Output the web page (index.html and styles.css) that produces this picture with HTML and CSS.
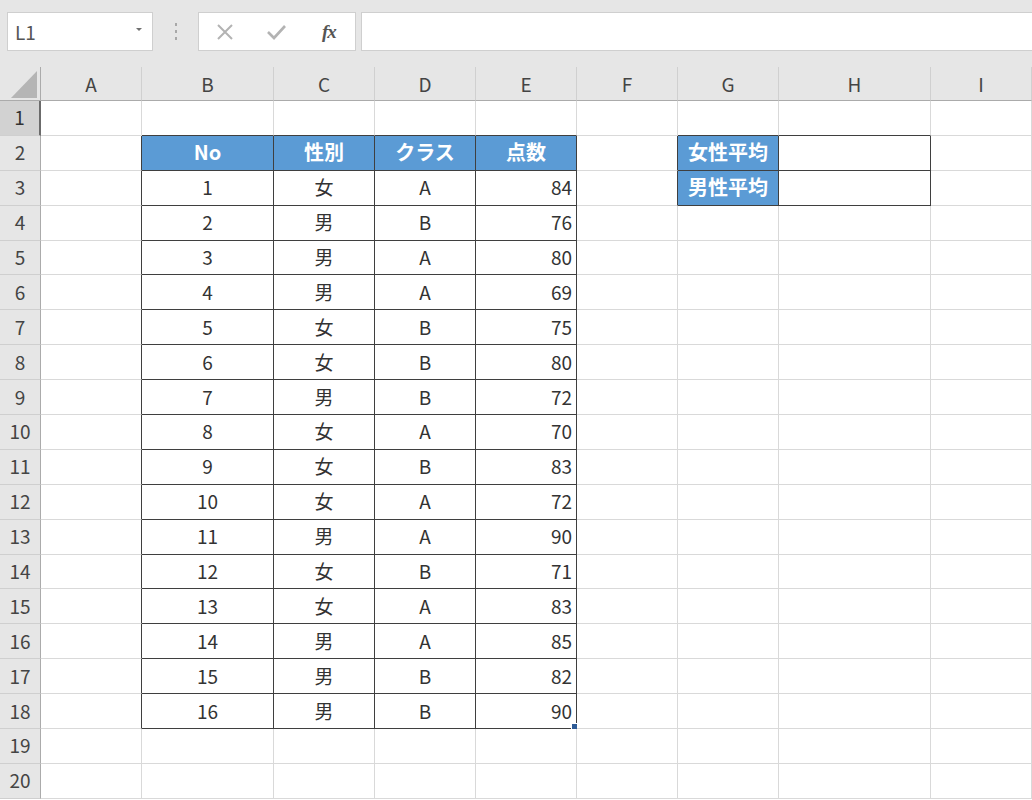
FILE: index.html
```html
<!DOCTYPE html>
<html lang="ja">
<head>
<meta charset="utf-8">
<link rel="stylesheet" href="styles.css">
</head>
<body>
<div class="toolbar">
  <div class="namebox"><span class="name">L1</span><span class="caret"></span></div>
  <div class="dots"><i></i><i></i><i></i></div>
  <div class="btns">
    <svg class="ico" width="20" height="20" viewBox="0 0 20 20"><path d="M3 3 L17 17 M17 3 L3 17" stroke="#b3b3b3" stroke-width="2" fill="none"/></svg>
    <svg class="ico" width="22" height="20" viewBox="0 0 22 20"><path d="M3 10 L9 16 L20 4" stroke="#b3b3b3" stroke-width="2.6" fill="none"/></svg>
    <span class="fx">fx</span>
  </div>
  <div class="formula"></div>
</div>
<div class="sheet" id="sheet">
  <div class="corner"><svg width="41" height="34" viewBox="0 0 41 34"><polygon points="11,31 37,31 37,4" fill="#b5b5b5"/></svg></div>
  <div class="ch">A</div><div class="ch">B</div><div class="ch">C</div><div class="ch">D</div><div class="ch">E</div><div class="ch">F</div><div class="ch">G</div><div class="ch">H</div><div class="ch">I</div>
</div>
<script src="app.js"></script>
</body>
</html>
```
FILE: app.js
```js
const data = [
  [1,'女','A',84],[2,'男','B',76],[3,'男','A',80],[4,'男','A',69],
  [5,'女','B',75],[6,'女','B',80],[7,'男','B',72],[8,'女','A',70],
  [9,'女','B',83],[10,'女','A',72],[11,'男','A',90],[12,'女','B',71],
  [13,'女','A',83],[14,'男','A',85],[15,'男','B',82],[16,'男','B',90]
];
const sheet = document.getElementById('sheet');
function cell(text, cls) {
  const d = document.createElement('div');
  d.className = 'c' + (cls ? ' ' + cls : '');
  d.textContent = text;
  sheet.appendChild(d);
  return d;
}
for (let r = 1; r <= 20; r++) {
  const rh = document.createElement('div');
  rh.className = 'rh' + (r === 1 ? ' sel' : '');
  rh.textContent = r;
  sheet.appendChild(rh);
  for (let c = 0; c < 9; c++) {
    let text = '';
    const cls = [];
    const inTable = r >= 2 && r <= 18 && c >= 1 && c <= 4;
    const inBox = r >= 2 && r <= 3 && (c === 6 || c === 7);
    if (inTable || inBox) { cls.push('tr', 'tb'); }
    if (r >= 2 && r <= 18 && c === 0) cls.push('tr');
    if (r >= 2 && r <= 3 && c === 5) cls.push('tr');
    if (r === 1 && ((c >= 1 && c <= 4) || c === 6 || c === 7)) cls.push('tb');
    if (r === 2 && c >= 1 && c <= 4) {
      text = ['No','性別','クラス','点数'][c - 1];
      cls.push('hd');
    }
    if (r >= 3 && r <= 18 && c >= 1 && c <= 4) {
      const row = data[r - 3];
      text = String(row[c - 1]);
      cls.push(c === 4 ? 'num' : 'ctr');
    }
    if (c === 6 && r === 2) { text = '女性平均'; cls.push('hd'); }
    if (c === 6 && r === 3) { text = '男性平均'; cls.push('hd'); }
    const d = cell(text, cls.join(' '));
    if (r === 18 && c === 4) {
      const h = document.createElement('span');
      h.className = 'handle';
      d.appendChild(h);
    }
  }
}
```
FILE: styles.css
```css
html, body { margin: 0; padding: 0; }
body {
  width: 1032px;
  height: 800px;
  overflow: hidden;
  background: #ffffff;
  font-family: "Noto Sans CJK JP", "Noto Sans", sans-serif;
}
.toolbar {
  height: 67px;
  box-sizing: border-box;
  padding: 12px 0 0 7px;
  background: #e6e6e6;
  display: flex;
  align-items: flex-start;
}
.namebox {
  width: 146px;
  height: 39px;
  box-sizing: border-box;
  background: #fff;
  border: 1px solid #cfcfcf;
  display: flex;
  align-items: center;
  justify-content: space-between;
  padding: 0 10px 0 7px;
}
.name { font-size: 19px; color: #555; font-family: "Noto Sans CJK JP", sans-serif; }
.caret {
  width: 0; height: 0;
  border-left: 3px solid transparent;
  border-right: 3px solid transparent;
  border-top: 3px solid #707070;
  margin-top: -4px;
}
.dots {
  width: 45px;
  height: 39px;
  display: flex;
  flex-direction: column;
  align-items: center;
  justify-content: center;
  gap: 4px;
}
.dots i { display: block; width: 2px; height: 3px; background: #a8a8a8; }
.btns {
  width: 158px;
  height: 39px;
  box-sizing: border-box;
  background: #fff;
  border: 1px solid #cfcfcf;
  display: flex;
  align-items: center;
  padding-left: 16px;
  gap: 30px;
}
.fx {
  font-family: "Liberation Serif", serif;
  font-style: italic;
  font-weight: bold;
  font-size: 19px;
  color: #555;
  margin-left: 5px;
  letter-spacing: -1px;
}
.formula {
  flex: 1;
  height: 39px;
  margin-left: 5px;
  margin-right: -4px;
  box-sizing: border-box;
  background: #fff;
  border: 1px solid #cfcfcf;
}
.sheet {
  display: grid;
  grid-template-columns: 41px 101px 132px 101px 101px 101px 101px 101px 152px 101px;
  grid-template-rows: 34px repeat(20, 34.9px);
}
.corner {
  background: #e6e6e6;
  border-right: 1px solid #ababab;
  border-bottom: 1px solid #ababab;
  box-sizing: border-box;
  overflow: hidden;
}
.corner svg { display: block; }
.ch {
  background: #e6e6e6;
  border-right: 1px solid #d0d0d0;
  border-bottom: 1px solid #ababab;
  box-sizing: border-box;
  display: flex;
  align-items: center;
  justify-content: center;
  font-size: 19px;
  color: #444;
  padding-bottom: 1px;
}
.rh {
  background: #e6e6e6;
  border-right: 1px solid #ababab;
  border-bottom: 1px solid #cfcfcf;
  box-sizing: border-box;
  display: flex;
  align-items: center;
  justify-content: center;
  font-size: 19px;
  color: #444;
  padding-bottom: 2px;
}
.rh.sel {
  background: #d2d2d2;
  border-right: 2px solid #6b6b6b;
  color: #333;
}
.c {
  position: relative;
  border-right: 1px solid #d9d9d9;
  border-bottom: 1px solid #d9d9d9;
  box-sizing: border-box;
  display: flex;
  align-items: center;
  font-size: 19px;
  color: #333;
  white-space: nowrap;
  padding-bottom: 2px;
}
.c.tr { border-right-color: #3f3f3f; }
.c.tb { border-bottom-color: #3f3f3f; }
.c.ctr { justify-content: center; }
.c.num { justify-content: flex-end; padding-right: 4px; }
.c.hd {
  background: #5b9bd5;
  color: #fff;
  font-weight: bold;
  justify-content: center;
  font-size: 20px;
}
.handle {
  position: absolute;
  right: -1px;
  bottom: -1px;
  width: 6px;
  height: 6px;
  box-sizing: border-box;
  background: #2e5b96;
  border-top: 1px solid #fff;
  border-left: 1px solid #fff;
}
```
